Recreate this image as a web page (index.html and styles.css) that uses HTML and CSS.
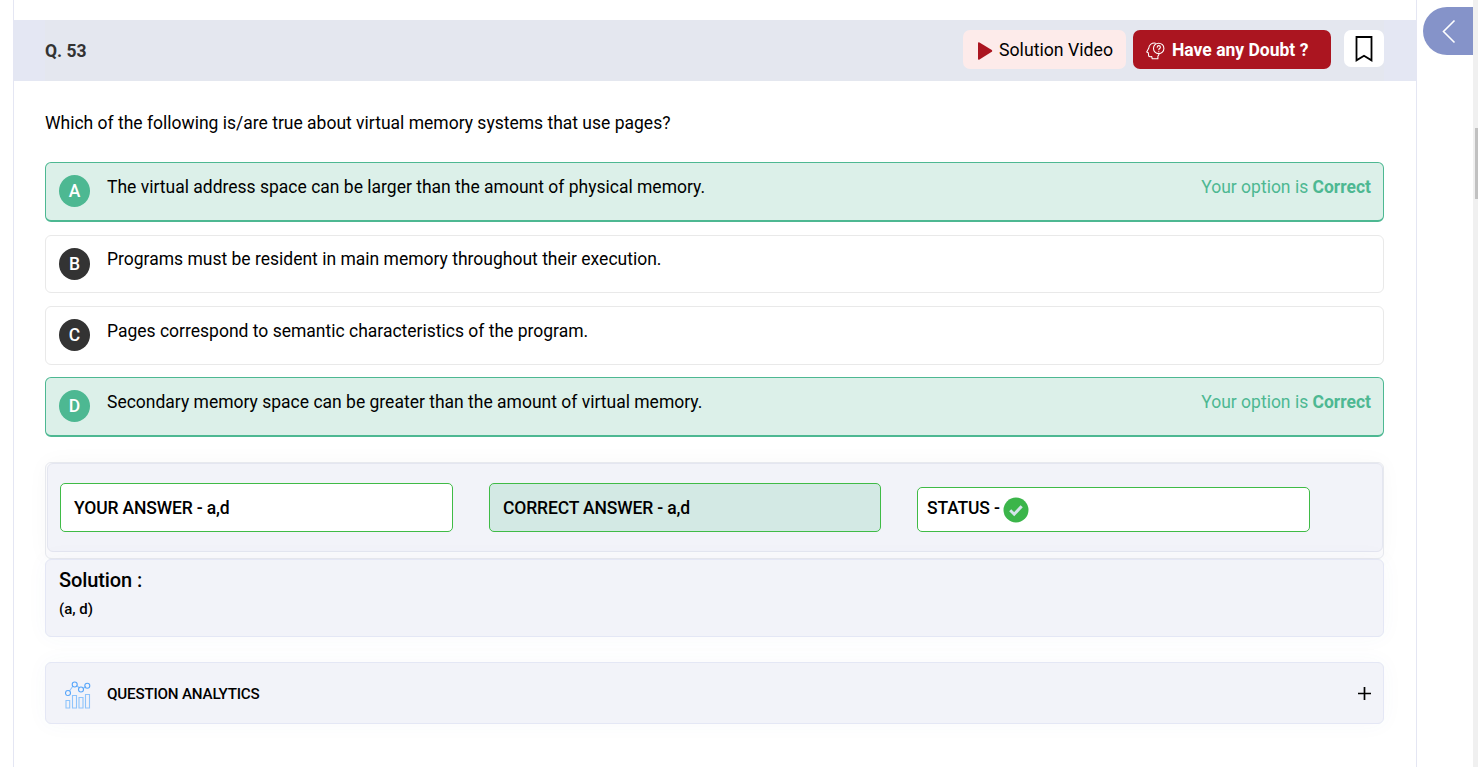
FILE: index.html
```html
<!DOCTYPE html>
<html lang="en">
<head>
<meta charset="utf-8">
<title>Question 53</title>
<link rel="stylesheet" href="styles.css">
</head>
<body>
<div class="page">
  <main class="panel">
    <header class="bar">
      <h1 class="number">Q. 53</h1>
      <div class="actions">
        <button class="btn video">
          <svg width="16" height="20" viewBox="0 0 16 20"><path d="M1 2.2Q1 .6 2.5 1.4L14.8 9q1 .9 0 1.800L2.500 18.600Q1 19.400 1 17.800Z" fill="#ab1520"/></svg>
          <span class="video-label">Solution Video</span>
        </button>
        <button class="btn doubt">
          <svg width="19" height="18" viewBox="0 0 19 18" fill="none" stroke="#fff" stroke-width="1.05" stroke-linecap="round" stroke-linejoin="round"><path d="M9.500 1.200C6 .6 3 2.600 2.700 6.300L.7 10l1.600.7.400 3.300c.2.8.8.9 3.100.6l.4 2.200h5.700v-2.600c.6-.5.900-1 1.100-2"/><circle cx="12.700" cy="6.400" r="5.200"/><path d="M11.200 5.200c0-2.100 3.200-2.100 3.200 0 0 1.300-1.600 1.300-1.600 2.600M12.800 9.500v.2"/></svg>
          <span class="doubt-label">Have any Doubt ?</span>
        </button>
        <button class="btn save" aria-label="Bookmark">
          <svg width="18" height="26" viewBox="0 0 18 26"><path d="M1.500 1h15v23.300L9 19.700l-7.500 4.600Z" fill="none" stroke="#000" stroke-width="1.800"/></svg>
        </button>
      </div>
    </header>
    <section class="content">
      <p class="question"><span class="q-text">Which of the following is/are true about virtual memory systems that use pages?</span></p>
      <div class="options">
        <div class="option right"><span class="letter">A</span><span class="text">The virtual address space can be larger than the amount of physical memory.</span><span class="verdict">Your option is <b>Correct</b></span></div>
        <div class="option"><span class="letter">B</span><span class="text">Programs must be resident in main memory throughout their execution.</span></div>
        <div class="option"><span class="letter">C</span><span class="text">Pages correspond to semantic characteristics of the program.</span></div>
        <div class="option right"><span class="letter">D</span><span class="text">Secondary memory space can be greater than the amount of virtual memory.</span><span class="verdict">Your option is <b>Correct</b></span></div>
      </div>
      <div class="answers-frame">
        <div class="answers">
          <div class="answer"><span>YOUR ANSWER - a,d</span></div>
          <div class="answer key"><span>CORRECT ANSWER - a,d</span></div>
          <div class="answer status"><span>STATUS -</span>
            <svg width="26" height="26" viewBox="0 0 26 26"><circle cx="13" cy="13" r="12.500" fill="#3bb54a"/><path d="M7.200 13.300l4 3.900 7.500-8" fill="none" stroke="#d5e4eb" stroke-width="3"/></svg>
          </div>
        </div>
      </div>
      <div class="card solution">
        <h2 class="solution-title">Solution :</h2>
        <p class="solution-text">(a, d)</p>
      </div>
      <div class="card analytics">
        <svg width="26" height="28" viewBox="0 0 26 28" fill="none" stroke="#8fc4fb" stroke-width="1.100"><path d="M4.500 10 8 5M11.500 4.500l3 2.500M18 7.500l3-2"/><g stroke="#58a6fa"><circle cx="3" cy="12" r="2.500"/><circle cx="9.700" cy="3.500" r="2.500"/><circle cx="16" cy="8.500" r="2.500"/><circle cx="22.300" cy="4.700" r="2.500"/></g><path d="M1 19.500h3.700V27H1zM7.500 14.500h4V27h-4zM14 16.500h4V27h-4zM20.500 13.500h4V27h-4z"/></svg>
        <span class="analytics-title">QUESTION ANALYTICS</span>
        <svg class="plus" width="13" height="13" viewBox="0 0 13 13"><path d="M6.500 0v13M0 6.500h13" stroke="#000" stroke-width="1.700"/></svg>
      </div>
    </section>
  </main>
  <div class="scrollbar"><div class="thumb"></div></div>
  <button class="drawer" aria-label="Open panel">
    <svg width="14" height="25" viewBox="0 0 14 25"><path d="M12.500 1.500 1.500 12.500l11 11" fill="none" stroke="#fff" stroke-width="1.600"/></svg>
  </button>
</div>
</body>
</html>
```
FILE: styles.css
```css
* { box-sizing: border-box; }
body { margin: 0; background: #fff; color: #000; font-family: Roboto, "Liberation Sans", sans-serif; overflow: hidden; }
h1, h2, p { margin: 0; font-weight: 400; }
button { border: 0; padding: 0; margin: 0; font-family: inherit; color: inherit; }
svg { display: block; flex: none; }
span { white-space: nowrap; }
.page { position: relative; display: flex; height: 767px; }
.panel { width: 1404px; margin-left: 13px; border: solid #e4e6f3; border-width: 0 1px; padding-top: 20px; }
.bar { height: 61px; display: flex; justify-content: space-between; padding: 9px 32px 0 31px; background: linear-gradient(to right, #e4e7f3 31px, #e4e7ef 31px, #e4e7ef calc(100% - 32px), #e4e7f3 calc(100% - 32px)); }
.number { font-size: 17.5px; line-height: 44px; font-weight: 700; color: #333; }
.actions { display: flex; align-items: flex-start; padding-top: 1px; }
.btn { height: 39px; display: flex; align-items: center; border-radius: 7px; font-size: 17.5px; }
.video { width: 163px; padding-left: 14px; gap: 6px; background: #fdebea; margin-right: 7px; }
.video-label { font-size: 17.7px; }
.video svg { margin-top: 3px; }
.doubt { width: 198px; padding-left: 13px; gap: 7px; background: #ab1520; color: #fff; font-weight: 700; margin-right: 13px; }
.doubt svg { margin-top: 3px; }
.save { width: 40px; height: 37px; justify-content: center; background: #fff; }
.content { padding: 0 32px 0 31px; }
.question { padding-top: 31px; height: 81px; font-size: 17.5px; line-height: 22px; }
.options { display: grid; grid-template-rows: 60px 58px 59px 60px; row-gap: 13px; height: 275px; }
.option { display: flex; align-items: flex-start; border: 1px solid #e9e9e9; border-radius: 6px; padding: 12px 12px 0 13px; font-size: 17.5px; line-height: 24px; }
.option:nth-child(2) .text { margin-top: -1px; }
.option:last-child { margin-top: -1px; }
.option.right { background: #dcf0e9; border-color: #4db892; border-bottom-width: 2px; height: 60px; }
.letter { width: 31px; height: 32px; border-radius: 50%; background: #333; color: #fff; font-weight: 500; line-height: 33px; text-align: center; margin-right: 17px; }
.right .letter { background: #4db892; }
.verdict { margin-left: auto; color: #4db892; }
.answers-frame { height: 97px; margin-top: 25px; border: 1px solid #e7e9ee; border-radius: 6px; padding: 0 0 0 1px; background: #fafafc; box-shadow: 0 0 22px #00000008; }
.answers { height: 89px; display: flex; align-items: flex-start; gap: 36px; padding: 19px 0 0 12px; border: 1px solid #e4e6f0; border-radius: 6px; background: #f2f3f9; }
.answer { width: 393px; height: 49px; border: 1px solid #3fbb46; border-radius: 5px; background: #fff; padding-left: 13px; font-size: 17.5px; letter-spacing: -.15px; line-height: 48px; font-weight: 500; }
.answer.key { background: #d3e9e4; width: 392px; }
.answer.status { height: 45px; margin-top: 4px; padding-left: 9px; line-height: 39px; display: flex; align-items: center; gap: 3px; }
.status svg { margin-top: 1px; }
.status span { margin-top: -2px; }
.card { background: #f2f3f9; border: 1px solid #e4e7f5; border-radius: 6px; box-shadow: 0 0 22px #5060a00a; }
.solution { height: 78px; padding: 7px 13px; }
.solution-title { font-size: 20px; letter-spacing: -.1px; font-weight: 500; line-height: 27px; }
.solution-text { font-size: 15px; font-weight: 500; line-height: 31px; }
.analytics { height: 62px; margin-top: 25px; display: flex; align-items: center; padding: 0 12px 0 19px; }
.analytics svg:first-child { margin-top: 4px; }
.analytics-title { margin-left: 16px; margin-top: 2px; font-size: 15.2px; letter-spacing: -.2px; font-weight: 500; line-height: 22px; }
.plus { margin-left: auto; }
.scrollbar { width: 5px; margin-left: auto; padding: 128px 0 0 2px; background: #f0f0f0; }
.thumb { height: 71px; background: #c1c1c1; }
.drawer { position: absolute; right: 5px; top: 7px; width: 50px; height: 48px; border-radius: 24px 0 0 24px; background: #8593c9; padding-left: 19px; }
```
